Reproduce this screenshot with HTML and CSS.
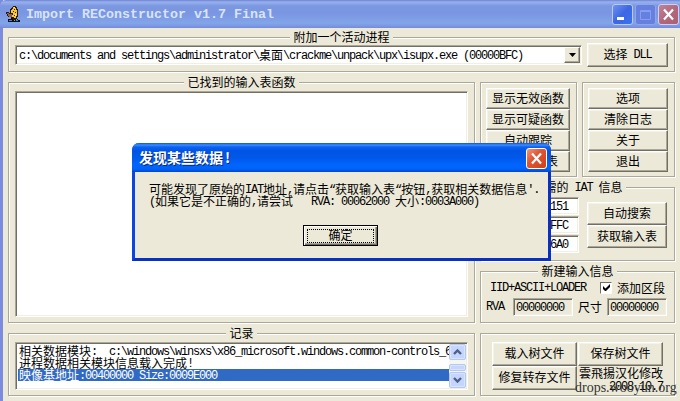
FILE: index.html
```html
<!DOCTYPE html>
<html lang="zh-CN">
<head>
<meta charset="utf-8">
<title>Import REConstructor v1.7 Final</title>
<link rel="stylesheet" href="styles.css">
</head>
<body>
<div class="window">
  <header class="titlebar">
    <svg class="app-icon" width="16" height="16" viewBox="0 0 16 16" shape-rendering="crispEdges">
      <path d="M7 0h3v1h1v2h1v8h-1v2h-1v1H6v-2H5v-1H2v-1H1V8H0V6h3v1h1V3h1V2h1V1h1z" fill="#2b1a10"/>
      <path d="M7 1h2v1h1v2h1v6h-1v2H8v-1H6V9h1V7H5V4h1V3h1z" fill="#fbc52f"/>
      <path d="M8 3h1v1H8zM7 5h1v1H7zM9 6h1v1H9zM8 9h1v1H8z" fill="#2b1a10"/>
      <path d="M8 1h1v1H8zM9 8h1v2H9z" fill="#fff08a"/>
      <path d="M1 7h2v1h3v3H3v-1H2V8H1z" fill="#98634a"/>
      <path d="M2 13h3v-1h2v2h1v1h1v-1h2v-1h1v1h2v2H2z" fill="#111"/>
      <path d="M3 14h3v1H3zM10 14h2v1h-2z" fill="#2a91d8"/>
    </svg>
    <h1>Import REConstructor v1.7 Final</h1>
    <div class="controls">
      <span class="ctl min"><svg width="19" height="19"><path d="M4 12h7v3H4z" fill="#fff"/></svg></span>
      <span class="ctl max"><svg width="19" height="19"><path d="M4.5 5.500h10v9h-10zM4 6.500h11" fill="none" stroke="#889cf0"/></svg></span>
      <span class="ctl close dim"><svg width="19" height="19"><path d="M5 4.500l9 10M14 4.500l-9 10" stroke="#fff" stroke-width="2.200"/></svg></span>
    </div>
  </header>

  <main class="content">
    <section class="group attach">
      <h2 class="legend">附加一个活动进程</h2>
      <div class="attach-row">
        <div class="combo sunken">
          <span class="combo-text"><i>c:\documents and settings\administrator\</i>桌面<i>\crackme\unpack\upx\isupx.exe (00000BFC)</i></span>
          <span class="drop"><svg width="7" height="4"><path d="M0 0h7L3.500 4z"/></svg></span>
        </div>
        <button class="btn dll">选择<i> DLL</i></button>
      </div>
    </section>

    <div class="columns">
      <div class="left">
        <section class="group imports">
          <h2 class="legend">已找到的输入表函数</h2>
          <div class="list sunken"></div>
        </section>
        <section class="group log">
          <h2 class="legend">记录</h2>
          <div class="log-box sunken">
            <div class="lines">
              <p>相关数据模块<i>:&nbsp; c:\windows\winsxs\x86_microsoft.windows.common-controls_6</i></p>
              <p>进程数据相关模块信息载入完成<i>!</i></p>
              <p class="selected">映像基地址<i>:00400000 Size:0009E000</i></p>
            </div>
            <div class="scroll">
              <span class="arrow"><svg width="9" height="6"><path d="M1 5l3.500-3.500L8 5" /></svg></span>
              <span class="thumb"></span>
              <span class="arrow"><svg width="9" height="6"><path d="M1 1l3.500 3.500L8 1" /></svg></span>
            </div>
          </div>
        </section>
      </div>

      <div class="right">
        <div class="pair">
          <section class="group stack show">
            <button class="btn">显示无效函数</button>
            <button class="btn">显示可疑函数</button>
            <button class="btn">自动跟踪</button>
            <button class="btn">清除输入表</button>
          </section>
          <section class="group stack opts">
            <button class="btn">选项</button>
            <button class="btn">清除日志</button>
            <button class="btn">关于</button>
            <button class="btn">退出</button>
          </section>
        </div>
        <section class="group iat">
          <h2 class="legend">所需的<i> IAT </i>信息</h2>
          <div class="iat-row">
            <div class="fields">
              <span class="field sunken"><i>00062151</i></span>
              <span class="field sunken"><i>00061FFC</i></span>
              <span class="field sunken"><i>000006A0</i></span>
            </div>
            <div class="iat-buttons">
              <button class="btn">自动搜索</button>
              <button class="btn">获取输入表</button>
            </div>
          </div>
        </section>
        <section class="group newinfo">
          <h2 class="legend">新建输入信息</h2>
          <div class="ni-top">
            <i>IID+ASCII+LOADER</i>
            <span class="check"><svg width="9" height="9"><path d="M1 3v3l2 2h1l4-4V1L3.500 5.500z"/></svg></span>
            <span>添加区段</span>
          </div>
          <div class="ni-bottom">
            <i class="rva">RVA</i>
            <span class="field off sunken"><i>00000000</i></span>
            <span class="size">尺寸</span>
            <span class="field off sunken"><i>00000000</i></span>
          </div>
        </section>
        <section class="group files">
          <button class="btn">载入树文件</button>
          <button class="btn">保存树文件</button>
          <button class="btn">修复转存文件</button>
          <div class="credit">雲飛揚汉化修改<br><i>2008.10.7</i></div>
        </section>
      </div>
    </div>
  </main>
</div>

<div class="dialog">
  <header class="dialog-title">
    <h2>发现某些数据<span class="bang">!</span></h2>
    <span class="ctl close"><svg width="19" height="19"><path d="M5 4.500l9 10M14 4.500l-9 10" stroke="#fff" stroke-width="2.200"/></svg></span>
  </header>
  <div class="dialog-body">
    <p>可能发现了原始的<i>IAT</i>地址<i>,</i>请点击<i>“</i>获取输入表<i>“</i>按钮<i>,</i>获取相关数据信息<i>'.</i></p>
    <p><i>(</i>如果它是不正确的<i>,</i>请尝试<i>&nbsp;&nbsp; RVA: 00062000 </i>大小<i>:0003A000)</i></p>
    <button class="ok"><span>确定</span></button>
  </div>
</div>
<div class="watermark">drops.wooyun.org</div>
</body>
</html>
```

FILE: styles.css
```css
* { box-sizing: border-box; margin: 0; padding: 0; }

body {
  width: 680px;
  height: 401px;
  overflow: hidden;
  position: relative;
  font: 12px/12px "Noto Sans CJK SC", sans-serif;
  color: #000;
}

h1, h2, button { font: inherit; color: inherit; }
p, button, .legend { white-space: pre; }

/* Half-width text on a 6px cell */
i {
  font: 12px/0 "Liberation Mono", monospace;
  letter-spacing: -1.2px;
  vertical-align: 1px;
  white-space: pre;
}

.window {
  height: 401px;
  background: #ece9d8;
  border-left: 3px solid #7b8be0;
}

.titlebar {
  height: 28px;
  margin-left: -3px;
  padding: 3px 1px 0 6px;
  display: flex;
  align-items: flex-start;
  border-top-left-radius: 6px;
  background: linear-gradient(#6e83d4 0, #98b2ee 2px, #7b97e0 6px, #7b96e2 14px, #82a5e8 23px, #7b97e3 26px, #748adb 28px);
}
.app-icon { margin-top: 3px; }
.titlebar h1 {
  flex: 1;
  margin: 4px 0 0 4px;
  font: bold 13.33px/16px "Liberation Mono", monospace;
  color: #d8e4f8;
  white-space: nowrap;
}
.controls { display: flex; gap: 2px; margin-top: 1px; }
.ctl {
  width: 21px;
  height: 21px;
  border: 1px solid #fff;
  border-radius: 3px;
  flex: none;
}
.ctl svg { display: block; }
.min { background: linear-gradient(135deg, #6f92f3, #3c67e3 50%, #3b72f0); border-color: #b9caf5; }
.max { background: #6680df; border-color: #90a5ec; }
.close { background: linear-gradient(135deg, #ee957c, #e05736 40%, #cf3f15); }
.close.dim { background: linear-gradient(135deg, #c08499, #b2687c 50%, #ad5f70); border-color: #ccd2f2; }

.content { padding: 9px 5px 0; }

.group {
  border: 1px solid #aca899;
  box-shadow: 1px 1px 0 #fff, inset 1px 1px 0 #fff;
}
.legend {
  width: fit-content;
  height: 13px;
  margin: -7px auto 0;
  padding: 0 3px;
  background: #ece9d8;
}

.btn {
  border: 1px solid;
  border-color: #fff #716f64 #716f64 #fff;
  background: #ece9d8;
  box-shadow: inset -1px -1px 0 #aca899, inset 1px 1px 0 #f5f3e9;
  text-align: center;
  padding-bottom: 2px;
}
.sunken {
  border: 1px solid;
  border-color: #aca899 #fff #fff #aca899;
  box-shadow: inset 1px 1px 0 #716f64, inset -1px -1px 0 #f1efe2;
  background: #fff;
}

.attach { height: 35px; width: 667px; }
.attach-row { display: flex; justify-content: space-between; padding: 0 6px; }
.combo { width: 567px; height: 20px; margin-top: 1px; display: flex; justify-content: space-between; padding: 2px 1px 1px 3px; }
.combo-text { line-height: 14px; white-space: nowrap; }
.drop {
  width: 16px;
  height: 16px;
  margin-top: -1px;
  display: grid;
  place-items: center;
  background: #ece9d8;
  border: 1px solid;
  border-color: #fff #716f64 #716f64 #fff;
  box-shadow: inset -1px -1px 0 #aca899;
}
.dll { width: 81px; height: 24px; margin-top: -1px; }

.columns { display: flex; gap: 5px; margin-top: 10px; }
.left { width: 467px; display: flex; flex-direction: column; gap: 10px; }
.imports { height: 241px; }
.list { height: 226px; margin: 2px 6px 0; }
.log { height: 63px; }
.log-box { height: 48px; margin: 2px 6px 0; padding: 1px 1px 1px 2px; display: flex; }
.lines { flex: 1; min-width: 0; padding-top: 1px; overflow: hidden; }
.lines p { height: 12px; padding-left: 1px; line-height: 12px; }
.lines .selected { background: #316ac5; color: #fff; }
.scroll { width: 17px; display: flex; flex-direction: column; justify-content: space-between; background: #f6f5ee; }
.arrow, .thumb {
  border: 1px solid #b4c8f6;
  border-radius: 2px;
  background: #c6d5fd;
  display: grid;
  place-items: center;
  box-shadow: inset 0 0 0 1px #d9e4ff;
}
.arrow { height: 16px; }
.arrow path { fill: none; stroke: #4d6185; stroke-width: 2.4; }
.thumb { height: 7px; margin-top: 3px; }

.right { width: 195px; display: flex; flex-direction: column; gap: 10px; }
.pair { display: flex; gap: 5px; height: 95px; }
.stack { display: flex; flex-direction: column; padding: 5px 5px 0; }
.stack .btn { height: 21px; }
.show { width: 97px; }
.opts { width: 93px; }
.show .btn { width: 84px; }
.opts .btn { width: 80px; }

.iat { height: 74px; }
.iat-row { display: flex; justify-content: space-between; padding: 0 7px 0 33px; }
.fields { display: flex; flex-direction: column; gap: 1px; padding-top: 3px; }
.field { display: block; width: 60px; height: 18px; padding: 1px 0 0 2px; line-height: 13px; }
.fields .field { width: 65px; padding-left: 5px; }
.iat-buttons { display: flex; flex-direction: column; padding-top: 8px; }
.iat-buttons .btn { width: 80px; height: 23px; }

.newinfo { height: 52px; }
.ni-top { display: flex; align-items: center; height: 13px; margin: 3px 0 0 9px; }
.check {
  width: 12px;
  height: 12px;
  margin: 0 5px 0 14px;
  background: #fff;
  border: 1px solid;
  border-color: #716f64 #fff #fff #716f64;
  display: grid;
  place-items: center;
}
.ni-top span, .size { line-height: 10px; }
.ni-bottom { display: flex; align-items: center; margin: 4px 0 0 5px; }
.rva { width: 27px; }
.size { width: 34px; padding-left: 5px; }
.off { background: #ece9d8; }

.files {
  height: 63px;
  display: grid;
  grid-template: 24px 24px / 85px 85px;
  column-gap: 1px;
  padding: 8px 0 0 11px;
}
.credit { line-height: 13px; text-align: right; white-space: nowrap; }

.dialog {
  position: absolute;
  left: 132px;
  top: 143px;
  width: 419px;
  height: 118px;
  border: solid #0a47e2;
  border-width: 0 3px 3px;
  border-radius: 7px 7px 0 0;
  background: #ece9d8;
  border-right-color: #0831c4;
  border-bottom-color: #0831c4;
}
.dialog-title {
  height: 29px;
  margin: 0 -3px;
  padding: 5px 4px 0 7px;
  display: flex;
  justify-content: space-between;
  border-radius: 7px 7px 0 0;
  background: linear-gradient(#0a52d8 0, #3c8cff 2px, #0c62f0 4px, #0054e3 8px, #0058ea 15px, #0066ff 22px, #0062f8 26px, #0046c8 29px);
}
.dialog-title h2 {
  font-weight: bold;
  font-size: 14px;
  line-height: 19px;
  color: #fff;
  text-shadow: 1px 1px 0 #0a2a83;
}
.bang { margin-left: 2px; }
.dialog-body { padding: 11px 0 0 14px; }
.ok {
  display: block;
  width: 75px;
  height: 21px;
  margin: 18px 0 0 154px;
  padding: 2px;
  background: #ece9d8;
  border: 1px solid #000;
  box-shadow: inset 1px 1px 0 #fff, inset -1px -1px 0 #716f64, inset -2px -2px 0 #aca899;
}
.ok span { display: block; height: 14px; border: 1px dotted #000; line-height: 10px; margin: 0 1px; }

.watermark {
  position: absolute;
  left: 575px;
  top: 380px;
  font: 14px/16px "Liberation Serif", serif;
  color: #333;
  white-space: nowrap;
}
```
